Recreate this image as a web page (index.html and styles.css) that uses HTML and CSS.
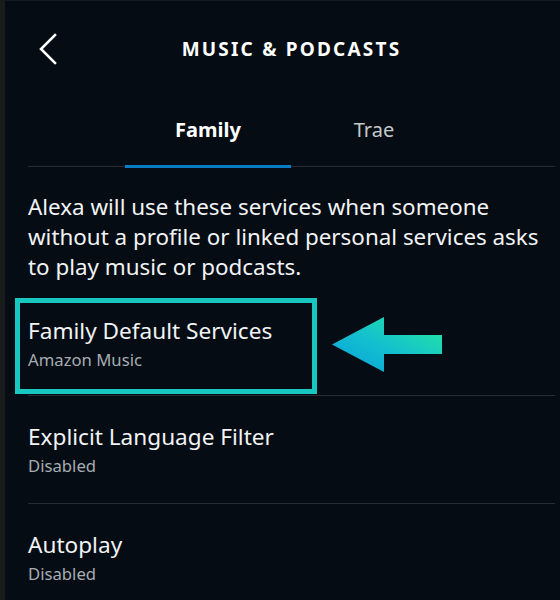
FILE: index.html
```html
<!DOCTYPE html>
<html>
<head>
<meta charset="utf-8">
<link rel="stylesheet" href="styles.css">
</head>
<body>
<div class="app">
  <header class="header">
    <button class="back" aria-label="Back">
      <svg width="20" height="32" viewBox="0 0 20 32"><polyline points="17,2 3,16 17,30" fill="none" stroke="#ffffff" stroke-width="2.6" stroke-linecap="square"/></svg>
    </button>
    <h1 class="title">MUSIC &amp; PODCASTS</h1>
    <span></span>
  </header>
  <nav class="tabs">
    <div class="tab active">Family</div>
    <div class="tab">Trae</div>
  </nav>
  <p class="desc">Alexa will use these services when someone without a profile or linked personal services asks to play music or podcasts.</p>
  <div class="highlight-row">
    <div class="highlight">
      <div class="row-title">Family Default Services</div>
      <div class="row-sub">Amazon Music</div>
    </div>
    <svg class="arrow" width="112" height="58" viewBox="0 0 112 58">
      <defs>
        <linearGradient id="g" x1="0" y1="1" x2="1" y2="0">
          <stop offset="0" stop-color="#0a9fdc"/>
          <stop offset="0.45" stop-color="#12bfcf"/>
          <stop offset="1" stop-color="#27eb9c"/>
        </linearGradient>
      </defs>
      <polygon points="0,27.5 52,0 52,18 110,18 110,37 52,37 52,55" fill="url(#g)"/>
    </svg>
  </div>
  <div class="sep"></div>
  <div class="row">
    <div class="row-title">Explicit Language Filter</div>
    <div class="row-sub">Disabled</div>
  </div>
  <div class="sep"></div>
  <div class="row">
    <div class="row-title">Autoplay</div>
    <div class="row-sub">Disabled</div>
  </div>
</div>
</body>
</html>
```
FILE: styles.css
```css
html, body {
  margin: 0;
  padding: 0;
  background: #050c14;
}
body {
  height: 600px;
  overflow: hidden;
  border-left: 5px solid #1a1b1c;
  border-top: 1px solid #15191d;
  box-sizing: border-box;
  font-family: "Noto Sans", "Open Sans", sans-serif;
  color: #f1f3f4;
}
.app {
  padding: 0 0 0 23px;
  width: 527px;
}
.header {
  height: 95px;
  display: grid;
  grid-template-columns: 1fr auto 1fr;
  align-items: center;
}
.back {
  background: none;
  border: 0;
  padding: 0;
  margin-left: 10px;
  width: 24px;
  height: 34px;
  display: flex;
  align-items: center;
}
.title {
  margin: 0;
  font-size: 19px;
  font-weight: 700;
  letter-spacing: 2.2px;
  color: #ffffff;
}
.tabs {
  display: flex;
  padding-left: 97px;
  border-bottom: 1px solid #262c31;
}
.tab {
  width: 166px;
  text-align: center;
  font-size: 20px;
  line-height: 24px;
  padding: 22px 0 23px;
  color: #c4c9cc;
  border-bottom: 3px solid transparent;
  margin-bottom: -2px;
}
.tab.active {
  font-weight: 700;
  color: #ffffff;
  border-bottom-color: #0a7cc4;
}
.desc {
  margin: 25px 0 0;
  padding-right: 8px;
  font-size: 22.4px;
  line-height: 30px;
  color: #f1f3f4;
}
.highlight-row {
  margin-top: 16px;
  margin-left: -13px;
  display: flex;
  align-items: center;
  gap: 15px;
}
.highlight {
  width: 302px;
  height: 96px;
  box-sizing: border-box;
  border: 5px solid #19c7c1;
  padding: 14px 0 0 8px;
}
.row-title {
  font-size: 22.6px;
  line-height: 28px;
  color: #f1f3f4;
}
.row-sub {
  margin-top: 5px;
  font-size: 16.7px;
  line-height: 20px;
  color: #a6adb2;
}
.sep {
  height: 1px;
  background: #262c31;
  margin-top: 1px;
}
.row {
  padding: 27px 0 26px;
}
```
